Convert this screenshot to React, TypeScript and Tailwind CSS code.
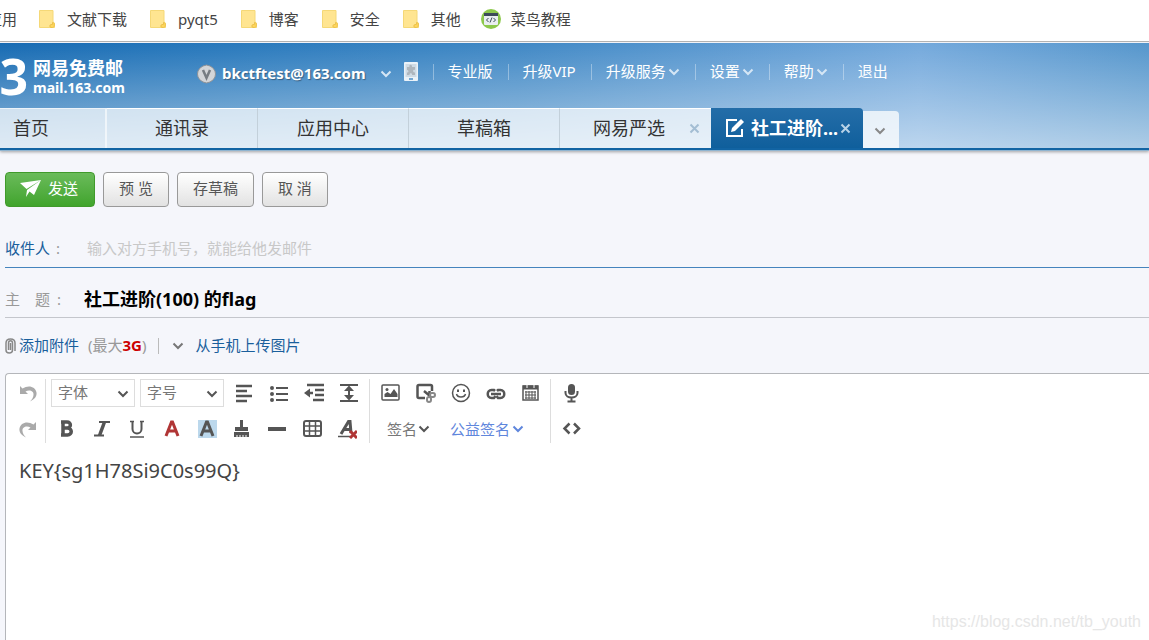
import React, { useState } from 'react';

const BOOKMARKS = ['文献下载', 'pyqt5', '博客', '安全', '其他'];
const TABS = ['通讯录', '应用中心', '草稿箱'];
const MENU = [
  { label: '专业版', arrow: false },
  { label: '升级VIP', arrow: false },
  { label: '升级服务', arrow: true },
  { label: '设置', arrow: true },
  { label: '帮助', arrow: true },
  { label: '退出', arrow: false },
];

const FolderIcon = () => (
  <svg width="16" height="18" viewBox="0 0 16 18" className="shrink-0">
    <path d="M.5.5h13.500V12l1.500 1v4.500H.5z" fill="#ffe591" stroke="#f5d877" />
    <path d="M12 17.500c-1.500 0-1.500-3 0-3h1.500v-2c2.500-.5 2.500 5 0 5z" fill="#ffd65c" stroke="#ecc24c" />
  </svg>
);

const Chevron = ({ className = '' }: { className?: string }) => (
  <svg width="12" height="8" viewBox="0 0 12 8" className={`shrink-0 ${className}`}>
    <path d="M1.5 1.5 6 6l4.5-4.5" fill="none" stroke="currentColor" strokeWidth="2" />
  </svg>
);

const CloseIcon = () => (
  <svg width="11" height="11" viewBox="0 0 11 11">
    <path d="m1.5 1.5 8 8m0-8-8 8" stroke="currentColor" strokeWidth="2" />
  </svg>
);

const Tool = ({ label, children }: { label: string; children: React.ReactNode }) => (
  <button type="button" aria-label={label} className="flex h-7 w-[35px] shrink-0 items-center justify-center text-[#555]">
    <svg width="20" height="20" viewBox="0 0 20 20" fill="none" stroke="currentColor" strokeWidth="2">
      {children}
    </svg>
  </button>
);

const ToolSelect = ({ label }: { label: string }) => (
  <div className="relative h-7 w-[84px] shrink-0 border border-[#ddd]">
    <select aria-label={label} className="h-full w-full appearance-none bg-white pb-[2px] pl-[6px] text-[15px] text-[#777] outline-none">
      <option>{label}</option>
    </select>
    <Chevron className="pointer-events-none absolute right-[5px] top-[10px] text-[#555]" />
  </div>
);

const BookmarkBar = () => (
  <nav className="flex h-[42px] shrink-0 items-center border-b border-[#b3b3b3] bg-white pb-[3px] text-[15px] text-[#444]">
    <a href="#" className="mr-[22px] flex w-[17px] justify-end overflow-hidden whitespace-nowrap">应用</a>
    {BOOKMARKS.map((name) => (
      <a key={name} href="#" className="mr-[23px] flex items-center gap-3 whitespace-nowrap">
        <FolderIcon />
        {name}
      </a>
    ))}
    <a href="#" className="-ml-[3px] flex items-center gap-[10px] whitespace-nowrap">
      <svg width="20" height="20" viewBox="0 0 20 20">
        <circle cx="10" cy="10" r="10" fill="#8cc84b" />
        <path d="M3 4.500h14V15q0 1-1 1H4q-1 0-1-1z" fill="#e9eef0" />
        <path d="M3 4h14v3H3z" fill="#3c4a58" />
        <path d="m7.500 9-2 2 2 2m5-4 2 2-2 2M11 8.500l-2 5" stroke="#3c4a58" fill="none" />
      </svg>
      菜鸟教程
    </a>
  </nav>
);

const Header = () => (
  <header className="relative z-10 mt-px shrink-0 border-b-2 border-[#1264a3] bg-[linear-gradient(to_bottom,transparent,rgba(255,255,255,0.52)),linear-gradient(to_right,#176bb3_0%,#2a7abd_22%,#4088c5_45%,#74a9dc_80%,#5596cc_100%)] text-white shadow-[0_1px_0_#8fb4d0,0_2px_3px_rgba(0,0,0,0.35)]">
    <div className="flex h-[65px] items-center">
      <div className="flex w-[197px] shrink-0 items-center gap-[5px] pt-1">
        <span className="flex w-7 justify-end overflow-hidden pb-1 text-[50px] font-bold leading-[56px]">163</span>
        <div className="whitespace-nowrap font-bold">
          <div className="text-[18px] leading-[20px]">网易免费邮</div>
          <div className="text-[14px] leading-[20px]">mail.163.com</div>
        </div>
      </div>
      <div className="flex shrink-0 items-center pb-2">
        <svg width="19" height="20" viewBox="0 0 19 20" className="mt-1">
          <path d="m9.500 1 3.500 1 3 2 2 3 .5 3-.5 3-2 3-3 2-3.500 1-3.500-1-3-2-2-3-.5-3 .5-3 2-3 3-2z" fill="#d3d5d8" stroke="#8d9298" />
          <path d="m6 6 3.500 8L13 6" fill="none" stroke="#777c82" strokeWidth="2.500" />
        </svg>
        <a href="#" className="ml-[6px] mt-1 text-[15px] font-bold [text-shadow:1px_1px_1px_rgba(0,0,0,0.35)]">bkctftest@163.com</a>
        <Chevron className="ml-[14px] mt-1 text-[#d5e6f5]" />
        <svg width="14" height="19" viewBox="0 0 14 19" className="ml-3">
          <rect width="14" height="19" rx="1" fill="#eaf2f8" />
          <path d="M1.500 2h11v13h-11z" fill="#cfdbe5" />
          <path d="M3 5h2.500c-1-3 3-3 2.500 0h3v3c-2.500-1-2.500 3 0 2.500V13H8c.5-2.500-3-2.500-2.500 0H3v-2.500c2 .5 2-3 0-2.500z" fill="#aeb6bd" />
          <path d="M5 17h4" stroke="#73a7d2" strokeWidth="2" />
        </svg>
        {MENU.map((item) => (
          <React.Fragment key={item.label}>
            <span className="ml-[15px] mr-[14px] h-4 w-px bg-white/35" />
            <a href="#" className="flex items-center gap-[2px] whitespace-nowrap text-[15px]">
              {item.label}
              {item.arrow && <Chevron className="text-[#d5e6f5]" />}
            </a>
          </React.Fragment>
        ))}
      </div>
    </div>
    <div className="flex h-10 items-end text-[18px] text-[#333]">
      <button type="button" className="h-full w-[107px] shrink-0 border-r-2 border-t border-white/60 bg-white/70 pl-[13px] text-left">首页</button>
      {TABS.map((tab) => (
        <button key={tab} type="button" className="h-full w-[151px] shrink-0 border-r border-t border-r-[#c3d0da] border-t-white bg-white/70">
          {tab}
        </button>
      ))}
      <div className="flex h-full w-[151px] shrink-0 items-center justify-between border-t border-white bg-white/70 pl-[33px] pr-[11px]">
        <button type="button">网易严选</button>
        <button type="button" aria-label="关闭网易严选" className="text-[#a3bdd3]"><CloseIcon /></button>
      </div>
      <div className="flex h-full w-[152px] shrink-0 items-center rounded-tr bg-linear-to-b from-[#236da8] to-[#0f5f9c] pl-[14px] text-white">
        <svg width="20" height="20" viewBox="0 0 20 20" fill="none">
          <path d="M12 2H2v16h15v-7" stroke="#fff" strokeWidth="2" />
          <path d="m6 14 1-4 9-9 3 3-9 9z" fill="#fff" />
        </svg>
        <button type="button" className="ml-[6px] whitespace-nowrap font-bold">社工进阶...</button>
        <button type="button" aria-label="关闭社工进阶" className="ml-[2px] text-[#b9d3e8]"><CloseIcon /></button>
      </div>
      <button type="button" aria-label="更多标签" className="flex h-[37px] w-9 shrink-0 items-center justify-center rounded-tr bg-white/75 pr-[3px] pt-[2px] text-[#888]">
        <Chevron />
      </button>
    </div>
  </header>
);

const Toolbar = () => (
  <div className="flex h-16 shrink-0">
    <div className="flex w-10 shrink-0 flex-col justify-between border-r border-[#ddd] pl-1">
      <Tool label="撤销">
        <path d="M2 3v8h8L7.500 8.500c4-2 8.500-.5 8 3.500-.2 2.500-1.500 4.500-3.500 6.500 5-2.500 7-5.500 6.500-9C17.500 3.500 10.500 1.500 4.500 5.500z" fill="#aaa" stroke="none" />
      </Tool>
      <Tool label="重做">
        <path d="M18 3v8h-8l2.500-2.500c-4-2-8.500-.5-8 3.500.2 2.500 1.500 4.500 3.500 6.500-5-2.500-7-5.500-6.500-9C2.500 3.500 9.500 1.500 15.500 5.500z" fill="#aaa" stroke="none" />
      </Tool>
    </div>
    <div className="flex w-[324px] shrink-0 flex-col justify-between border-r border-[#ddd]">
      <div className="flex pl-[5px]">
        <ToolSelect label="字体" />
        <div className="w-[5px] shrink-0" />
        <ToolSelect label="字号" />
        <div className="w-[2px] shrink-0" />
        <Tool label="对齐">
          <path d="M2 3h16M2 8h11M2 13h16M2 18h11" strokeWidth="2.500" />
        </Tool>
        <Tool label="列表">
          <path d="M7 5h12M7 11h12M7 17h12" />
          <path d="M3 5h0M3 11h0M3 17h0" strokeWidth="4" strokeLinecap="round" />
        </Tool>
        <Tool label="缩进">
          <path d="M3 2h17M11 7h9M11 12h9M9 17h11M3 10h6" strokeWidth="2.500" />
          <path d="m0 10 6-4.500v9z" fill="currentColor" stroke="none" />
        </Tool>
        <Tool label="行距">
          <path d="M1 2h18M1 18h18M10 5v10" />
          <path d="m10 2.500 5 5.500H5zM10 17.500 15 12H5z" fill="currentColor" stroke="none" />
        </Tool>
      </div>
      <div className="flex pl-[3px]">
        <Tool label="加粗">
          <path d="M6 3.500v12M4 3h6c4.500 0 4.500 6 0 6H6h4.500c5 0 5 7 0 7H4" strokeWidth="3.500" />
        </Tool>
        <Tool label="斜体">
          <path d="M7 3h11M2 16.500h10" />
          <path d="m12.500 3-5 13.500" strokeWidth="3.500" />
        </Tool>
        <Tool label="下划线">
          <path d="M3 18h14M3 2.500h4M13 2.500h4" strokeWidth="1.500" />
          <path d="M5.500 2v8c0 6 9 6 9 0V2" />
        </Tool>
        <Tool label="文字颜色">
          <path d="M4 17 9.500 3h1L16 17M6 12h8" stroke="#b03535" strokeWidth="3" />
        </Tool>
        <Tool label="背景颜色">
          <path d="M1 1h19v18H1z" fill="#bcd8ec" stroke="none" />
          <path d="M4 17 9.500 3h1L16 17M6 12h8" strokeWidth="3" />
        </Tool>
        <Tool label="格式刷">
          <path d="M9.500 1v9" strokeWidth="3" />
          <path d="M3 8h13v4H3zM2 13h15v5H2z" fill="currentColor" stroke="none" />
          <path d="M5 16v3M8 16v3M11 16v3M14 16v3" stroke="#fff" strokeWidth="1" />
        </Tool>
        <Tool label="分隔线">
          <path d="M1 10h18" strokeWidth="4" />
        </Tool>
        <Tool label="表格">
          <rect x="2" y="2" width="17" height="15" rx="2" />
          <path d="M2 7h17M2 12h17M7.500 2v15M13.500 2v15" strokeWidth="1.500" />
        </Tool>
        <Tool label="清除格式">
          <path d="m4 15 7.500-12.500h1.500L14 14M7 10.500h7" strokeWidth="3" />
          <path d="M1 17.500h12" strokeWidth="1.500" />
          <path d="m13 12 7 7m0-7-7 7" stroke="#b03535" strokeWidth="3" />
        </Tool>
      </div>
    </div>
    <div className="flex w-[181px] shrink-0 flex-col justify-between border-r border-[#ddd]">
      <div className="flex pl-[3px]">
        <Tool label="图片">
          <rect x="1" y="2" width="17" height="15" rx="1" strokeWidth="1.500" />
          <path d="M3.500 14v-3l3-2 3 2L13 6l3.500 5v3z" fill="currentColor" stroke="none" />
          <circle cx="6" cy="6.500" r="1.500" fill="currentColor" stroke="none" />
        </Tool>
        <Tool label="截图">
          <path d="M9 15H3q-1.500 0-1.500-1.500V3.500Q1.500 2 3 2h11.500q1.500 0 1.500 1.500V8" strokeWidth="2.500" />
          <path d="m8 8 6 5M13.500 8v6" strokeWidth="2.500" />
          <rect x="14" y="10" width="5" height="4" rx="2" stroke="#888" />
          <rect x="11" y="14" width="4" height="5" rx="2" stroke="#888" />
        </Tool>
        <Tool label="表情">
          <circle cx="10" cy="10" r="8.500" strokeWidth="1.500" />
          <path d="M7 6.500v2.500M13 6.500v2.500" />
          <path d="M5.500 11c1 4 8 4 9 0" strokeWidth="1.500" />
        </Tool>
        <Tool label="链接">
          <path d="M9 8 8 7H5.500c-5 0-5 8 0 8H8l1.500-2M11 8l1-1h2.500c5 0 5 8 0 8H12l-1.500-2" strokeWidth="2.500" />
          <path d="M5 11h10" strokeWidth="2.500" />
        </Tool>
        <Tool label="日历">
          <rect x="2" y="3" width="15" height="14" strokeWidth="1.500" />
          <path d="M2 4.500h15" strokeWidth="4" />
          <path d="M6 1v4M13 1v4" stroke="#fff" strokeWidth="1" />
          <path d="M4 9h11M4 12h11M4 15h11M5 8v8M8 8v8M11 8v8M14 8v8" strokeWidth="1" />
        </Tool>
      </div>
      <div className="flex h-7 items-center whitespace-nowrap pl-[17px] text-[15px]">
        <button type="button" className="flex items-center gap-px text-[#777]">
          签名
          <Chevron className="text-[#555]" />
        </button>
        <button type="button" className="ml-5 flex items-center gap-[2px] text-[#5f86dc]">
          公益签名
          <Chevron />
        </button>
      </div>
    </div>
    <div className="flex shrink-0 flex-col justify-between pl-[3px]">
      <Tool label="语音">
        <rect x="6" y="1" width="7" height="11" rx="3.500" fill="currentColor" stroke="none" />
        <path d="M3.500 8v2c0 6 12 6 12 0V8M9.500 14v5M5.500 18.500h8" />
      </Tool>
      <Tool label="源码">
        <path d="m7.500 4.500-5 5 5 5M12 4.500l5 5-5 5" strokeWidth="2.500" />
      </Tool>
    </div>
  </div>
);

const App: React.FC = () => {
  const [to, setTo] = useState('');
  const [subject, setSubject] = useState('社工进阶(100) 的flag');
  const [body, setBody] = useState('KEY{sg1H78Si9C0s99Q}');

  const buttonClass =
    'h-[35px] rounded border border-[#999] bg-linear-to-b from-white to-[#e2e2e2] px-[15px] pb-[2px] text-[15px] text-[#555]';

  return (
    <div className="relative flex min-h-screen flex-col overflow-hidden bg-[#f5f6fb] font-['Noto_Sans','Noto_Sans_CJK_SC',sans-serif]">
      <BookmarkBar />
      <Header />

      <main className="flex flex-1 flex-col pl-[5px]">
        <div className="mt-[22px] flex gap-2">
          <button
            type="button"
            className="flex h-[35px] w-[90px] items-center gap-[6px] rounded border border-[#409a2b] bg-linear-to-b from-[#6abb5a] to-[#40a42b] pb-[2px] pl-[14px] text-[15px] text-white"
          >
            <svg width="22" height="18" viewBox="0 0 22 18" fill="#fff">
              <path d="M0 3 21 0 6.500 9zM21 0l-7 15-4.500-3.500L6 17l1-7z" />
            </svg>
            发送
          </button>
          <button type="button" className={buttonClass}>预 览</button>
          <button type="button" className={buttonClass}>存草稿</button>
          <button type="button" className={buttonClass}>取 消</button>
        </div>

        <div className="mt-6 flex h-[37px] items-center border-b border-[#4584bd] pb-px text-[15px]">
          <label htmlFor="to" className="w-[82px] shrink-0 text-[#1a5f9c]">
            收件人<span className="ml-[6px] text-[#999]">:</span>
          </label>
          <input
            id="to"
            value={to}
            onChange={(e) => setTo(e.target.value)}
            placeholder="输入对方手机号，就能给他发邮件"
            className="flex-1 bg-transparent outline-none placeholder:text-[#c8c8c8]"
          />
        </div>

        <div className="flex h-[50px] items-center border-b border-[#c4c6cc] pt-[14px]">
          <label htmlFor="subject" className="flex w-[79px] shrink-0 text-[15px] text-[#999]">
            主<span className="ml-[15px]">题</span><span className="ml-[7px]">:</span>
          </label>
          <input
            id="subject"
            value={subject}
            onChange={(e) => setSubject(e.target.value)}
            className="flex-1 bg-transparent text-[18px] font-bold text-black outline-none"
          />
        </div>

        <div className="flex h-[55px] items-center whitespace-nowrap text-[15px] text-[#999]">
          <svg width="11" height="16" viewBox="0 0 11 16" fill="none" stroke="#888" strokeWidth="1.500" className="mr-[3px]">
            <path d="M3.500 12V5c0-3 4-3 4 0v7c0 4-6.500 4-6.500 0V5c0-5.500 9-5.500 9 0v8M5.500 5v7" />
          </svg>
          <a href="#" className="text-[#1a5f9c]">添加附件</a>
          <span className="ml-[9px]">(最大<b className="text-[#c00]">3G</b>)</span>
          <span className="ml-[11px] h-4 w-px bg-[#bbb]" />
          <Chevron className="ml-[13px] text-[#777]" />
          <a href="#" className="ml-3 text-[#1a5f9c]">从手机上传图片</a>
        </div>

        <section className="flex flex-1 flex-col rounded-tl border-l border-t border-[#b4b6ba] bg-white pt-[5px]">
          <Toolbar />
          <textarea
            aria-label="正文"
            value={body}
            onChange={(e) => setBody(e.target.value)}
            className="flex-1 resize-none bg-transparent px-[13px] pt-[13px] text-[20px] leading-[30px] text-[#444] outline-none"
          />
        </section>
      </main>

      <div className="pointer-events-none absolute bottom-2 right-2 font-['Liberation_Sans',sans-serif] text-[16px] leading-[20px] text-[#e6e6e6]">
        https://blog.csdn.net/tb_youth
      </div>
    </div>
  );
};

export default App;
